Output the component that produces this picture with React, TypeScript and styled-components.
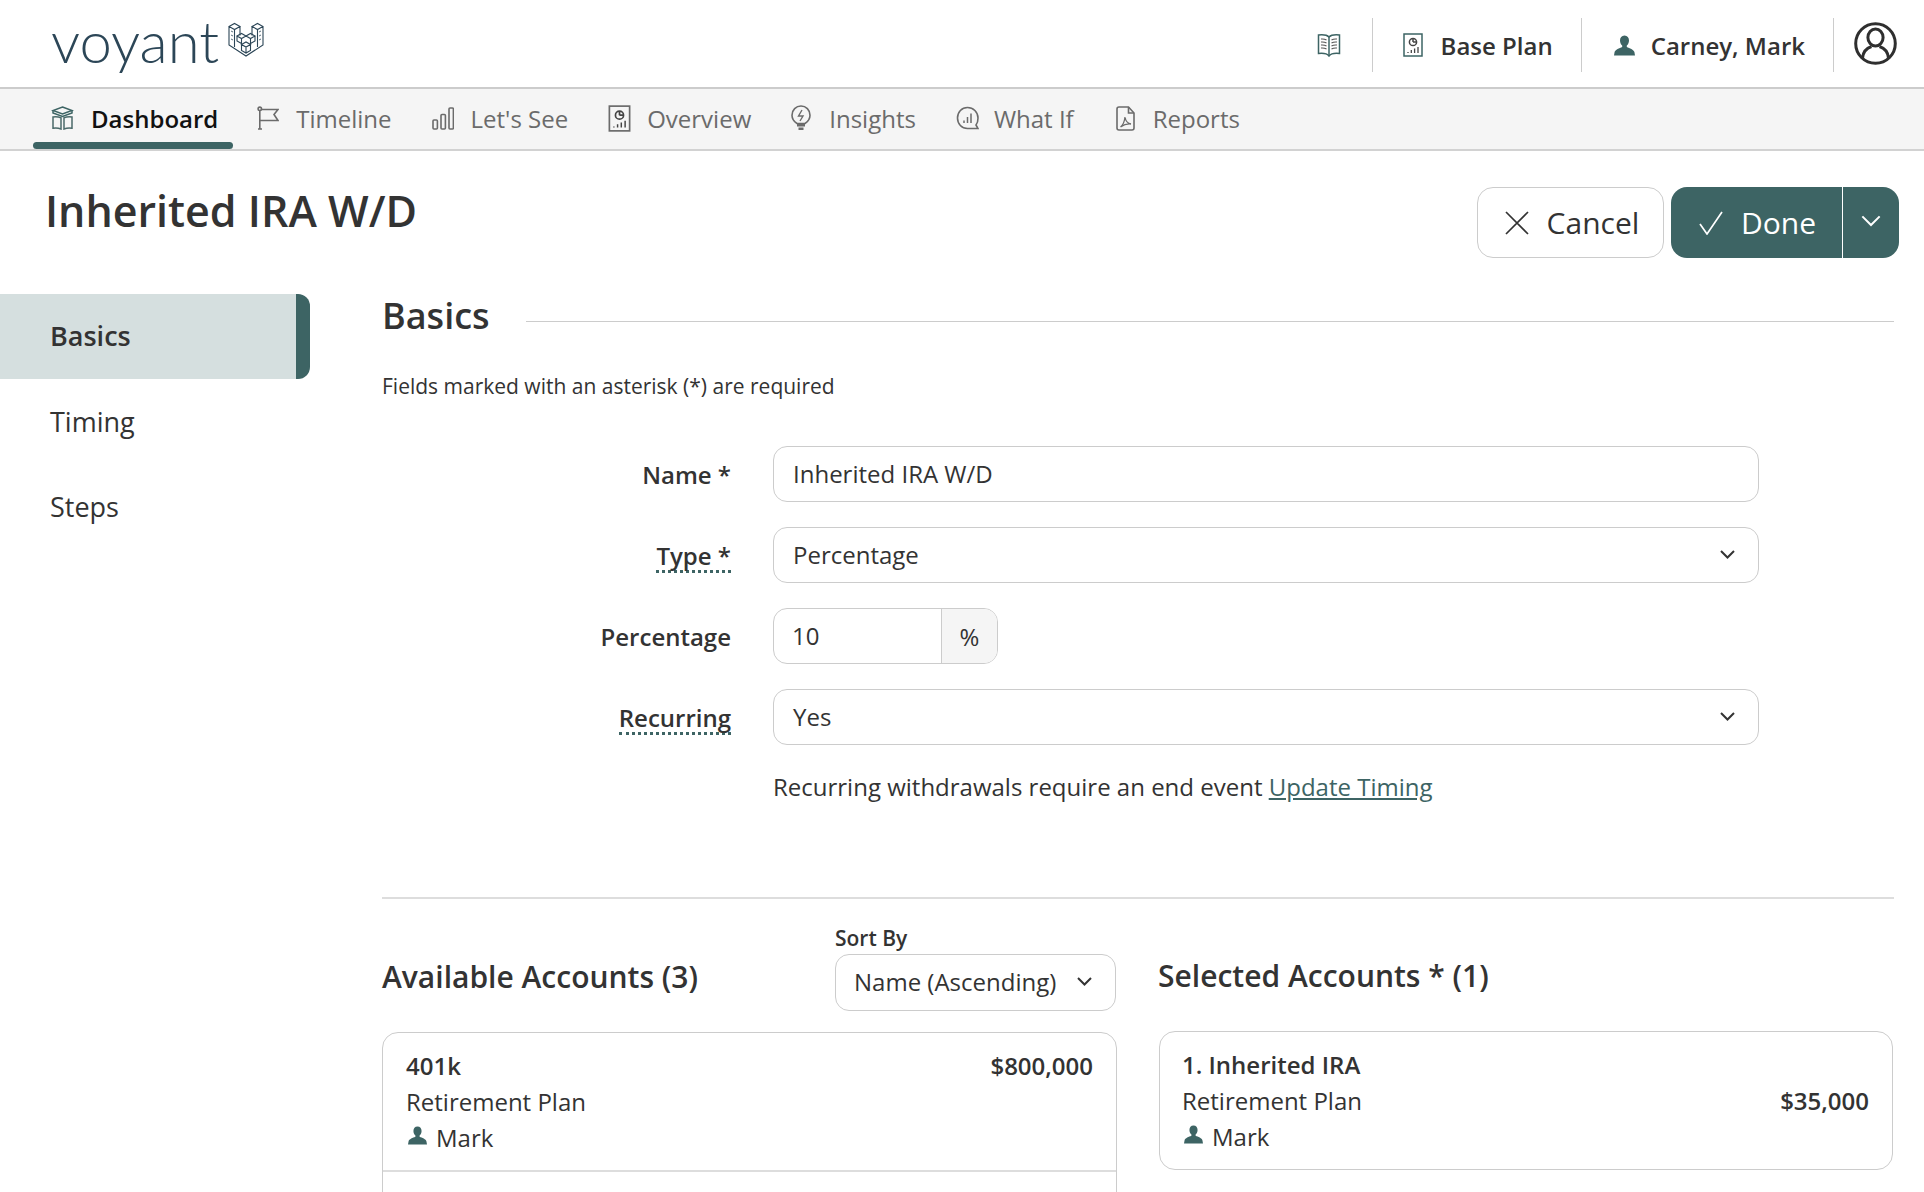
import React from "react";
import styled, { createGlobalStyle } from "styled-components";

const teal = "#3d6464";

const GlobalStyle = createGlobalStyle`
  html, body {
    margin: 0;
    padding: 0;
    background: #fff;
  }
  body {
    font-family: "Open Sans", "Noto Sans", sans-serif;
    color: #333;
  }
  * {
    box-sizing: border-box;
  }
`;

type IconProps = { size?: number; color?: string };

function PersonIcon({ size = 21, color = teal }: IconProps) {
  return (
    <svg width={size} height={size} viewBox="0 0 21 20" fill={color}>
      <path d="M10.5 0C7.6 0 6 2.2 6 5c0 2.2 1 4 2.2 5.1v1.4C5.4 12.6 1.2 14.2.6 16.5L0 20h21l-.6-3.5c-.6-2.3-4.8-3.9-7.6-5v-1.4C14 9 15 7.2 15 5c0-2.8-1.6-5-4.5-5z" />
    </svg>
  );
}

function PlanIcon({ color = teal, width = 20, height = 24 }: IconProps & { width?: number; height?: number }) {
  return (
    <svg width={width} height={height} viewBox="0 0 20 24" fill="none" stroke={color} strokeWidth="1.5">
      <rect x="1" y="1" width="18" height="22" />
      <circle cx="10" cy="9" r="3.6" stroke="#444" />
      <path d="M10 9V5.4M10 9h3.6" stroke="#444" />
      <path d="M5 20v-1M8.3 20v-3M11.6 20v-4.5M15 20v-6" strokeWidth="1.3" stroke="#444" />
    </svg>
  );
}

function BookIcon() {
  return (
    <svg width="24" height="24" viewBox="0 0 24 24" fill="none" stroke={teal} strokeWidth="1.5">
      <path d="M12 4C10 2 6 1.500 1.500 2v18.500C6 20 10 20.500 12 23c2-2.500 6-3 10.500-2.500V2C18 1.500 14 2 12 4z" />
      <path d="M12 4v19" />
      <path d="M4 6c2-.2 4 .1 5.500 1M4 9c2-.2 4 .1 5.500 1M4 12c2-.2 4 .1 5.500 1M4 15c2-.2 4 .1 5.500 1M20 6c-2-.2-4 .1-5.500 1M20 9c-2-.2-4 .1-5.500 1M20 12c-2-.2-4 .1-5.500 1M20 15c-2-.2-4 .1-5.500 1" stroke="#555" strokeWidth="1.100" />
    </svg>
  );
}

function AvatarIcon() {
  return (
    <svg width="43" height="43" viewBox="0 0 43 43" fill="none" stroke="#2f2f2f" strokeWidth="3">
      <circle cx="21.5" cy="21.5" r="19.8" />
      <ellipse cx="21.5" cy="15.5" rx="7.6" ry="8.6" />
      <path d="M8.5 36c.6-6 4.5-10 9-11.5M34.5 36c-.6-6-4.5-10-9-11.5" />
    </svg>
  );
}

function CubesIcon() {
  return (
    <svg width="23" height="24" viewBox="0 0 23 24" fill="none" stroke={teal} strokeWidth="1.5">
      <path d="M11.5 1 21 4.500l-9.500 3.500L2 4.500z" />
      <path d="M2 4.500V7l9.500 3.500L21 7V4.500" />
      <path d="M2 11c2.500-.4 5.500-.2 8 .8V23c-2.500-1-5.500-1.200-8-.8zM21 11c-2.500-.4-5.500-.2-8 .8V23c2.500-1 5.500-1.200 8-.8z" stroke="#4b6a6a" />
    </svg>
  );
}

function FlagIcon() {
  return (
    <svg width="22" height="24" viewBox="0 0 22 24" fill="none" stroke="#6b6b6b" strokeWidth="1.6">
      <circle cx="2.800" cy="2.800" r="1.700" />
      <path d="M2.800 4.500V23M1 23h4" />
      <path d="M4.500 3.500H21l-4 5 4 6H2.800" />
    </svg>
  );
}

function BarsIcon() {
  return (
    <svg width="22" height="23" viewBox="0 0 22 23" fill="none" stroke="#6b6b6b" strokeWidth="1.6">
      <rect x="1" y="13" width="4.400" height="9" rx="1" />
      <rect x="9" y="7.500" width="4.400" height="14.500" rx="1" />
      <rect x="17" y="1" width="4.400" height="21" rx="1" />
    </svg>
  );
}

function BulbIcon() {
  return (
    <svg width="20" height="26" viewBox="0 0 20 26" fill="none" stroke="#6b6b6b" strokeWidth="1.6">
      <path d="M6 18.500C3 16.500 1 13.800 1 10.200 1 5 5 1 10 1s9 4 9 9.200c0 3.600-2 6.300-5 8.300z" />
      <path d="M11 5 7.500 11h4.500L9 16" strokeWidth="1.400" />
      <path d="M6 18.500h8v3H6zM7.500 22.500h5V25h-5z" fill="#6b6b6b" stroke="none" />
    </svg>
  );
}

function ChatChartIcon() {
  return (
    <svg width="23" height="24" viewBox="0 0 23 24" fill="none" stroke="#6b6b6b" strokeWidth="1.6">
      <path d="M11.500 1.500C5.800 1.500 1.500 6 1.500 12s4.300 10.500 10 10.500H22l-2-3.500c1.600-1.900 2-4.400 2-7 0-6-4.800-10.500-10.500-10.500z" />
      <path d="M8 17v-2.500M11.500 17v-6M15 17V7.500" strokeWidth="1.500" />
    </svg>
  );
}

function PdfIcon() {
  return (
    <svg width="19" height="25" viewBox="0 0 19 25" fill="none" stroke="#6b6b6b" strokeWidth="1.6">
      <path d="M3 1h9.500L18 7v15a2 2 0 0 1-2 2H3a2 2 0 0 1-2-2V3a2 2 0 0 1 2-2z" />
      <path d="M12.500 1v6H18" />
      <path d="M4.500 21c2.500-2 4-5 4.500-10 .6 4 3 6.500 6 7-3-.4-7 .5-10.500 3z" strokeWidth="1.300" />
    </svg>
  );
}

function Chevron({ color = "#333", width = 15, weight = 2 }: IconProps & { width?: number; weight?: number }) {
  return (
    <svg width={width} height={width * 0.6} viewBox="0 0 15 9" fill="none" stroke={color} strokeWidth={weight}>
      <path d="M1 1l6.500 6.500L14 1" />
    </svg>
  );
}

function LogoMark() {
  return (
    <svg width="36" height="36" viewBox="0 0 36 36" fill="none" stroke="#2c4657" strokeWidth="1.100">
      <path d="M1 5.500 6.500 2.500l5.500 3-5.500 3zM1 5.500V24l17 11 17-11V5.500M12 5.500v9M24 5.500 29.500 2.500l5.500 3-5.500 3zM24 5.500v9M6.500 8.500V26M29.500 8.500V26" />
      <path d="M9 15l4.500-2.500 4.500 2.500-4.500 2.500zM18 15l4.500-2.500L27 15l-4.500 2.500zM9 15v5l4.500 2.500V17.500M27 15v5l-4.500 2.500V17.500" />
      <path d="M13.500 23.500 18 21l4.500 2.500L18 26zM13.500 23.500v6L18 32l4.500-2.500v-6M18 26v6" />
      <path d="M3 10l2 1M3 14l2 1M3 18l2 1M33 10l-2 1M33 14l-2 1M33 18l-2 1" strokeWidth=".800" />
    </svg>
  );
}

function CancelIcon() {
  return (
    <svg width="24" height="24" viewBox="0 0 24 24" fill="none" stroke="#333" strokeWidth="1.700">
      <path d="M1 1l22 22M23 1 1 23" />
    </svg>
  );
}

function CheckIcon() {
  return (
    <svg width="24" height="24" viewBox="0 0 24 24" fill="none" stroke="#fff" strokeWidth="1.700">
      <path d="M1 13l7 10L23 1" />
    </svg>
  );
}

const Page = styled.div`
  height: 1192px;
  overflow: hidden;
`;

const Header = styled.header`
  height: 89px;
  display: flex;
  align-items: center;
  padding: 0 27px 0 51px;
  border-bottom: 2px solid #ccc;
  background: #fff;
`;

const Logo = styled.div`
  display: flex;
  align-items: flex-start;
  gap: 9px;
  margin-top: -6px;
  margin-right: auto;
`;

const Wordmark = styled.span`
  font-family: Lato, sans-serif;
  font-weight: 300;
  font-size: 58px;
  line-height: 60px;
  color: #2c4657;
`;

const LogoSlot = styled.span`
  display: flex;
  margin-top: 10px;
`;

const HeaderItem = styled.div`
  height: 54px;
  margin-top: 3px;
  display: flex;
  align-items: center;
  gap: 18px;
  padding: 0 28px 0 30px;
  border-right: 1px solid #ccc;
  font-size: 24px;
  font-weight: 600;
  color: #333;
`;

const BookSlot = styled(HeaderItem)`
  padding: 0 31px 0 0;
`;

const UserItem = styled(HeaderItem)`
  padding: 0 28px 0 32px;
  gap: 16px;
`;

const AvatarSlot = styled.div`
  display: flex;
  margin-left: 20px;
  margin-top: 0;
`;

const Nav = styled.nav`
  height: 62px;
  display: flex;
  align-items: stretch;
  padding-left: 33px;
  gap: 6px;
  background: #f5f5f5;
  border-bottom: 2px solid #d2d2d2;
`;

const NavItem = styled.a<{ $active?: boolean; $gap?: number }>`
  position: relative;
  display: flex;
  align-items: center;
  gap: ${({ $gap }) => $gap ?? 17}px;
  padding: 0 ${({ $active }) => ($active ? 15 : 16)}px 2px 18px;
  font-size: 24px;
  font-weight: ${({ $active }) => ($active ? 600 : 400)};
  color: ${({ $active }) => ($active ? "#111" : "#6b6b6b")};

  ${({ $active }) =>
    $active &&
    `&::after {
      content: "";
      position: absolute;
      left: 0;
      right: 0;
      bottom: 0;
      height: 7px;
      border-radius: 4px;
      background: ${teal};
    }`}
`;

const ReportsItem = styled(NavItem)`
  margin-left: 2px;
`;

const TitleRow = styled.div`
  display: flex;
  align-items: flex-start;
  justify-content: space-between;
  padding: 36px 25px 0 45px;
`;

const Title = styled.h1`
  margin: 0;
  font-size: 43px;
  line-height: 48px;
  font-weight: 600;
  color: #333;
`;

const Actions = styled.div`
  display: flex;
  gap: 7px;
`;

const CancelButton = styled.button`
  height: 71px;
  width: 187px;
  display: flex;
  align-items: center;
  justify-content: center;
  gap: 18px;
  padding: 0 0 0 3px;
  background: #fff;
  border: 1px solid #ccc;
  border-radius: 16px;
  font: 400 30px "Open Sans", sans-serif;
  color: #333;
`;

const DoneGroup = styled.div`
  height: 71px;
  display: flex;
  border-radius: 16px;
  overflow: hidden;
  background: ${teal};
  color: #fff;
`;

const DoneButton = styled.div`
  width: 172px;
  display: flex;
  align-items: center;
  justify-content: center;
  gap: 18px;
  padding-left: 2px;
  font-size: 30px;
  font-weight: 400;
  border-right: 1px solid #fff;
`;

const DoneCaret = styled.div`
  width: 56px;
  display: flex;
  align-items: center;
  justify-content: center;
  padding-bottom: 3px;
`;

const Body = styled.div`
  display: flex;
  margin-top: 36px;
`;

const SideNav = styled.aside`
  width: 310px;
  flex: none;
`;

const SideItem = styled.div<{ $active?: boolean }>`
  height: 85px;
  display: flex;
  align-items: center;
  padding-left: 50px;
  padding-bottom: ${({ $active }) => ($active ? 2 : 0)}px;
  font-size: 27px;
  font-weight: ${({ $active }) => ($active ? 600 : 400)};
  color: #333;
  ${({ $active }) =>
    $active &&
    `background: #d5dfdf;
    border-right: 14px solid ${teal};
    border-radius: 0 12px 12px 0;`}
`;

const Main = styled.main`
  flex: 1;
  padding: 0 30px 0 72px;
`;

const SectionHead = styled.div`
  height: 44px;
  display: flex;
  align-items: center;
  gap: 36px;
`;

const SectionTitle = styled.h2`
  margin: 0;
  font-size: 36px;
  font-weight: 600;
  line-height: 44px;
  color: #333;
`;

const SectionRule = styled.div`
  flex: 1;
  height: 1px;
  margin-top: 10px;
  background: #ccc;
`;

const Note = styled.p`
  margin: 33px 0 0;
  font-size: 21px;
  line-height: 30px;
  color: #333;
`;

const Form = styled.div`
  display: grid;
  grid-template-columns: 349px 986px;
  column-gap: 42px;
  row-gap: 25px;
  margin-top: 45px;
`;

const Label = styled.div`
  display: flex;
  align-items: center;
  justify-content: flex-end;
  height: 56px;
  font-size: 24px;
  font-weight: 600;
  color: #333;
`;

const DottedLabel = styled.span`
  border-bottom: 3px dotted ${teal};
  line-height: 29px;
  margin-top: 4px;
`;

const Field = styled.div`
  height: 56px;
  display: flex;
  align-items: center;
  justify-content: space-between;
  padding: 0 23px 2px 19px;
  border: 1.500px solid #ccc;
  border-radius: 14px;
  font-size: 24px;
  color: #333;
  background: #fff;
`;

const AddonField = styled.div`
  width: 225px;
  height: 56px;
  display: flex;
  border: 1.500px solid #ccc;
  border-radius: 14px;
  overflow: hidden;
  font-size: 24px;
`;

const AddonInput = styled.div`
  flex: 1;
  display: flex;
  align-items: center;
  padding: 0 0 2px 18px;
`;

const Addon = styled.div`
  width: 56px;
  display: flex;
  align-items: center;
  justify-content: center;
  background: #f5f5f5;
  border-left: 1.500px solid #ccc;
`;

const HelpRow = styled.div`
  margin: 27px 0 0 391px;
  font-size: 24px;
  line-height: 30px;
  color: #333;
`;

const HelpLink = styled.a`
  color: ${teal};
  text-decoration: underline;
`;

const Divider = styled.div`
  height: 2px;
  margin-top: 95px;
  background: #ddd;
`;

const Accounts = styled.div`
  display: grid;
  grid-template-columns: 735px 734px;
  column-gap: 42px;
  margin-top: 25px;
`;

const AccountsHead = styled.div<{ $height: number }>`
  height: ${({ $height }) => $height}px;
  display: flex;
  align-items: flex-end;
  justify-content: space-between;
  margin-bottom: 21px;
`;

const AccountsTitle = styled.h3<{ $inset?: number }>`
  margin: 0 0 11px ${({ $inset }) => $inset ?? 0}px;
  font-size: 30px;
  line-height: 46px;
  font-weight: 600;
  color: #333;
`;

const SortGroup = styled.div`
  width: 281px;
  margin-right: 1px;
`;

const SortLabel = styled.div`
  margin-bottom: 1px;
  font-size: 21px;
  font-weight: 600;
  line-height: 30px;
`;

const SortField = styled(Field)`
  height: 57px;
  padding-left: 18px;
`;

const Card = styled.div`
  border: 1.500px solid #ccc;
  border-radius: 16px;
`;

const OpenCard = styled(Card)`
  height: 400px;
`;

const Row = styled.div<{ $selected?: boolean }>`
  display: flex;
  justify-content: space-between;
  align-items: ${({ $selected }) => ($selected ? "center" : "flex-start")};
  height: 137px;
  padding: ${({ $selected }) => ($selected ? "15px 23px 14px 22px" : "15px 23px 14px")};
  font-size: 24px;
  line-height: 36px;
`;

const RowDivider = styled.div`
  height: 2px;
  background: #ddd;
`;

const Name = styled.div`
  font-weight: 600;
`;

const Amount = styled.div`
  font-weight: 600;
`;

const Owner = styled.div`
  display: flex;
  align-items: center;
  gap: 9px;
  padding-left: 2px;
`;

const OwnerIcon = styled.span`
  display: flex;
  margin-bottom: 5px;
`;

export default function App() {
  return (
    <Page>
      <GlobalStyle />
      <Header>
        <Logo>
          <Wordmark>voyant</Wordmark>
          <LogoSlot>
            <LogoMark />
          </LogoSlot>
        </Logo>
        <BookSlot>
          <BookIcon />
        </BookSlot>
        <HeaderItem>
          <PlanIcon />
          Base Plan
        </HeaderItem>
        <UserItem>
          <PersonIcon />
          Carney, Mark
        </UserItem>
        <AvatarSlot>
          <AvatarIcon />
        </AvatarSlot>
      </Header>
      <Nav>
        <NavItem $active>
          <CubesIcon />
          Dashboard
        </NavItem>
        <NavItem>
          <FlagIcon />
          Timeline
        </NavItem>
        <NavItem>
          <BarsIcon />
          Let's See
        </NavItem>
        <NavItem $gap={16}>
          <PlanIcon color="#6b6b6b" width={23} height={27} />
          Overview
        </NavItem>
        <NavItem $gap={18}>
          <BulbIcon />
          Insights
        </NavItem>
        <NavItem $gap={15}>
          <ChatChartIcon />
          What If
        </NavItem>
        <ReportsItem $gap={18}>
          <PdfIcon />
          Reports
        </ReportsItem>
      </Nav>
      <TitleRow>
        <Title>Inherited IRA W/D</Title>
        <Actions>
          <CancelButton>
            <CancelIcon />
            Cancel
          </CancelButton>
          <DoneGroup>
            <DoneButton>
              <CheckIcon />
              Done
            </DoneButton>
            <DoneCaret>
              <Chevron color="#fff" width={20} weight={1.5} />
            </DoneCaret>
          </DoneGroup>
        </Actions>
      </TitleRow>
      <Body>
        <SideNav>
          <SideItem $active>Basics</SideItem>
          <SideItem>Timing</SideItem>
          <SideItem>Steps</SideItem>
        </SideNav>
        <Main>
          <SectionHead>
            <SectionTitle>Basics</SectionTitle>
            <SectionRule />
          </SectionHead>
          <Note>Fields marked with an asterisk (*) are required</Note>
          <Form>
            <Label>Name *</Label>
            <Field>Inherited IRA W/D</Field>
            <Label>
              <DottedLabel>Type *</DottedLabel>
            </Label>
            <Field>
              Percentage
              <Chevron />
            </Field>
            <Label>Percentage</Label>
            <AddonField>
              <AddonInput>10</AddonInput>
              <Addon>%</Addon>
            </AddonField>
            <Label>
              <DottedLabel>Recurring</DottedLabel>
            </Label>
            <Field>
              Yes
              <Chevron />
            </Field>
          </Form>
          <HelpRow>
            Recurring withdrawals require an end event <HelpLink>Update Timing</HelpLink>
          </HelpRow>
          <Divider />
          <Accounts>
            <div>
              <AccountsHead $height={87}>
                <AccountsTitle>Available Accounts (3)</AccountsTitle>
                <SortGroup>
                  <SortLabel>Sort By</SortLabel>
                  <SortField>
                    Name (Ascending)
                    <Chevron />
                  </SortField>
                </SortGroup>
              </AccountsHead>
              <OpenCard>
                <Row>
                  <div>
                    <Name>401k</Name>
                    <div>Retirement Plan</div>
                    <Owner>
                      <OwnerIcon>
                        <PersonIcon size={19} />
                      </OwnerIcon>
                      Mark
                    </Owner>
                  </div>
                  <Amount>$800,000</Amount>
                </Row>
                <RowDivider />
              </OpenCard>
            </div>
            <div>
              <AccountsHead $height={86}>
                <AccountsTitle $inset={-1}>Selected Accounts * (1)</AccountsTitle>
              </AccountsHead>
              <Card>
                <Row $selected>
                  <div>
                    <Name>1. Inherited IRA</Name>
                    <div>Retirement Plan</div>
                    <Owner>
                      <OwnerIcon>
                        <PersonIcon size={19} />
                      </OwnerIcon>
                      Mark
                    </Owner>
                  </div>
                  <Amount>$35,000</Amount>
                </Row>
              </Card>
            </div>
          </Accounts>
        </Main>
      </Body>
    </Page>
  );
}
